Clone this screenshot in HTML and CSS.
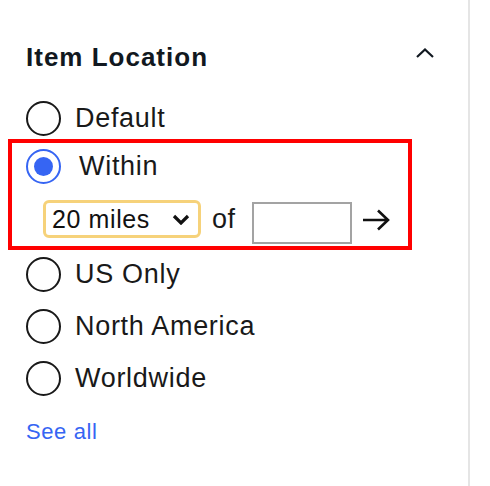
FILE: index.html
```html
<!DOCTYPE html>
<html lang="en">
<head>
<meta charset="utf-8">
<title>Item Location</title>
<link rel="stylesheet" href="styles.css">
</head>
<body>
<aside class="filter">
  <div class="filter-header">
    <h3 class="filter-title">Item Location</h3>
    <svg class="collapse" width="18" height="10" viewBox="0 0 18 10" aria-hidden="true"><path d="M1 9 L9 1.5 L17 9" fill="none" stroke="#111820" stroke-width="2.2"/></svg>
  </div>
  <div class="options">
    <label class="option"><span class="radio"></span><span class="label">Default</span></label>
    <div class="highlight">
      <label class="option option-within"><span class="radio checked"></span><span class="label">Within</span></label>
      <div class="distance">
        <div class="select"><span>20 miles</span><svg width="18" height="11" viewBox="0 0 18 11" aria-hidden="true"><path d="M2 2 L9 9 L16 2" fill="none" stroke="#111" stroke-width="3.2"/></svg></div>
        <span class="of">of</span>
        <span class="zip"></span>
        <svg class="go" width="28" height="22" viewBox="0 0 28 22" aria-hidden="true"><path d="M1 11 H26 M16 1.5 L26 11 L16 20.5" fill="none" stroke="#111" stroke-width="2.6"/></svg>
      </div>
    </div>
    <label class="option option-us"><span class="radio"></span><span class="label">US Only</span></label>
    <label class="option"><span class="radio"></span><span class="label">North America</span></label>
    <label class="option"><span class="radio"></span><span class="label">Worldwide</span></label>
  </div>
  <a class="see-all" href="#">See all</a>
</aside>
</body>
</html>
```
FILE: styles.css
```css
html, body {
  margin: 0;
  padding: 0;
  background: #fff;
}
body {
  font-family: "Liberation Sans", Arial, sans-serif;
  color: #191919;
}
.filter {
  box-sizing: border-box;
  width: 470px;
  height: 486px;
  border-right: 2px solid #e5e5e5;
  padding: 41px 0 0 26px;
}
.filter-header {
  display: flex;
  align-items: center;
  justify-content: space-between;
  width: 408px;
  height: 32px;
}
.filter-title {
  margin: 0;
  font-size: 26px;
  line-height: 32px;
  font-weight: bold;
  letter-spacing: 1px;
  color: #111820;
}
.collapse {
  display: block;
  margin-top: -8px;
}
.options {
  margin-top: 27px;
  display: flex;
  flex-direction: column;
}
.option {
  display: flex;
  align-items: center;
  height: 36px;
  gap: 14px;
}
.option + .option {
  margin-top: 16px;
}
.radio {
  box-sizing: border-box;
  width: 35px;
  height: 35px;
  border: 2px solid #191919;
  border-radius: 50%;
  display: flex;
  align-items: center;
  justify-content: center;
  flex: none;
}
.radio.checked {
  border-color: #3665f3;
}
.radio.checked::after {
  content: "";
  width: 19px;
  height: 19px;
  border-radius: 50%;
  background: #3665f3;
}
.label {
  font-size: 27px;
  line-height: 32px;
  letter-spacing: 0.7px;
}
.highlight {
  box-sizing: border-box;
  width: 404px;
  margin: 3px 0 0 -18px;
  border: 4px solid #ff0000;
  padding: 5px 0 2px 14px;
}
.option-within {
  gap: 18px;
}
.distance {
  display: flex;
  align-items: flex-start;
  margin-top: 16px;
  margin-left: 17px;
  height: 44px;
}
.select {
  box-sizing: border-box;
  width: 158px;
  height: 38px;
  border: 3px solid #f6d27a;
  border-radius: 6px;
  display: flex;
  align-items: center;
  justify-content: space-between;
  padding: 0 8px 0 6px;
  font-size: 25px;
  letter-spacing: 0.6px;
  color: #111;
}
.select svg {
  display: block;
}
.of {
  margin-left: 11px;
  font-size: 27px;
  line-height: 38px;
  letter-spacing: 0.5px;
}
.zip {
  box-sizing: border-box;
  width: 100px;
  height: 42px;
  margin-left: 16px;
  margin-top: 2px;
  border: 2px solid #a3a3a3;
}
.go {
  display: block;
  margin-left: 10px;
  margin-top: 9px;
}
.option-us {
  margin-top: 6px;
}
.see-all {
  display: inline-block;
  margin-top: 23px;
  font-size: 22px;
  line-height: 26px;
  letter-spacing: 0.6px;
  color: #3665f3;
  text-decoration: none;
}
```
